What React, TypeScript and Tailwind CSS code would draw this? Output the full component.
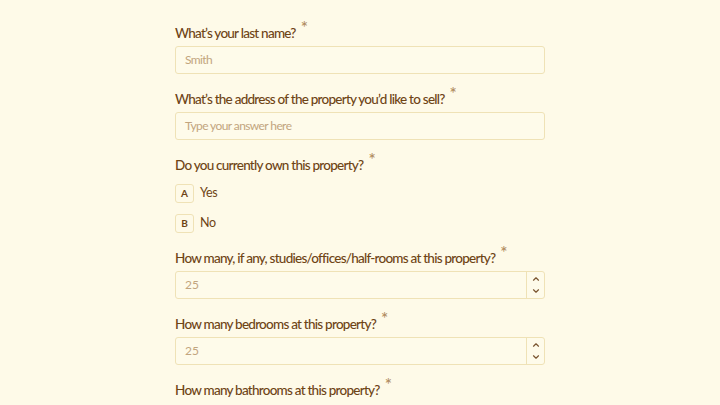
import { ChevronDown, ChevronUp } from 'lucide-react';

function Label({ children }: { children: React.ReactNode }) {
  return (
    <div className="flex h-5 items-center text-[13.5px] font-medium leading-5 tracking-[-0.75px] text-[#6e4415]">
      <span>{children}</span>
      <span className="relative -top-[5px] ml-[5px] text-[17px] text-[#b08b5e]">*</span>
    </div>
  );
}

function TextInput({ placeholder }: { placeholder: string }) {
  return (
    <div className="mt-[3px] flex h-7 items-center rounded-[3px] border border-[#efe2b6] bg-[#fefbea] px-[9px] text-[12px] tracking-[-0.6px] text-[#c2a57e]">
      {placeholder}
    </div>
  );
}

function NumberInput({ value }: { value: string }) {
  return (
    <div className="mt-[3px] flex h-7 items-stretch rounded-[3px] border border-[#efe2b6] bg-[#fefbea] text-[12px] text-[#c2a57e]">
      <div className="flex flex-1 items-center px-[9px]">{value}</div>
      <div className="flex w-[18px] flex-col items-center justify-center gap-[2px] border-l border-[#efe2b6] text-[#7a5530]">
        <ChevronUp className="h-[10px] w-[10px]" strokeWidth={2.8} />
        <ChevronDown className="h-[10px] w-[10px]" strokeWidth={2.8} />
      </div>
    </div>
  );
}

function Option({ letter, text }: { letter: string; text: string }) {
  return (
    <div className="flex h-[19px] items-center gap-[6px]">
      <span className="flex h-[19px] w-[19px] items-center justify-center rounded-[3px] border border-[#efe2b6] text-[10px] font-bold text-[#6e4415]">
        {letter}
      </span>
      <span className="text-[12.5px] tracking-[-0.4px] text-[#6e4415]">{text}</span>
    </div>
  );
}

export default function App() {
  return (
    <div
      className="h-[405px] w-[720px] overflow-hidden bg-[#fefae8]"
      style={{ fontFamily: 'Lato, "Open Sans", sans-serif' }}
    >
      <div className="mx-auto w-[370px] pt-[23px]">
        <Label>What’s your last name?</Label>
        <TextInput placeholder="Smith" />

        <div className="mt-[15px]">
          <Label>What’s the address of the property you’d like to sell?</Label>
          <TextInput placeholder="Type your answer here" />
        </div>

        <div className="mt-[15px]">
          <Label>Do you currently own this property?</Label>
          <div className="mt-[9px] flex flex-col gap-[11px]">
            <Option letter="A" text="Yes" />
            <Option letter="B" text="No" />
          </div>
        </div>

        <div className="mt-[15px]">
          <Label>How many, if any, studies/offices/half-rooms at this property?</Label>
          <NumberInput value="25" />
        </div>

        <div className="mt-[15px]">
          <Label>How many bedrooms at this property?</Label>
          <NumberInput value="25" />
        </div>

        <div className="mt-[15px]">
          <Label>How many bathrooms at this property?</Label>
        </div>
      </div>
    </div>
  );
}
